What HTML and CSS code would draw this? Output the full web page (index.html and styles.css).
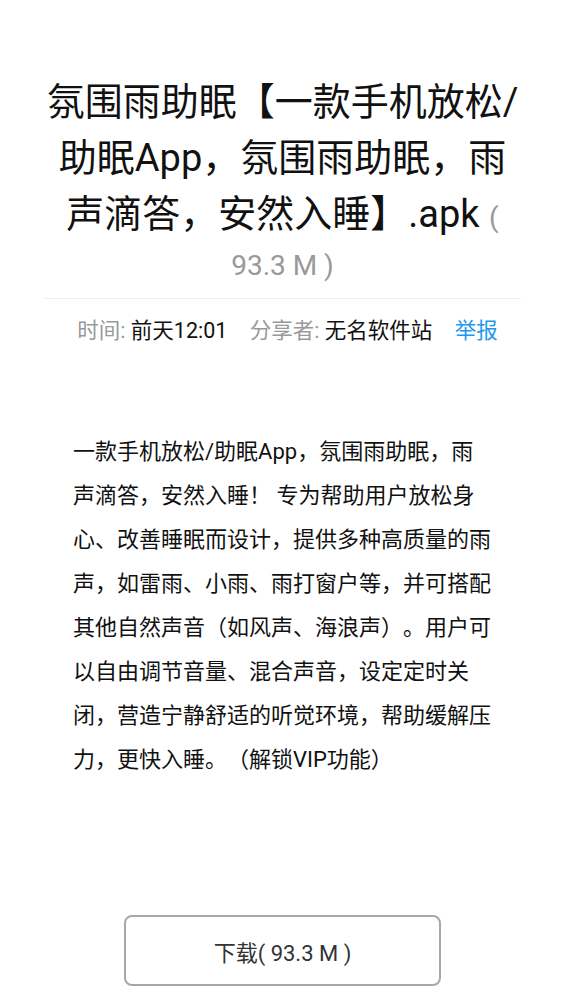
FILE: index.html
```html
<!DOCTYPE html>
<html lang="zh">
<head>
<meta charset="utf-8">
<title>氛围雨助眠</title>
<link rel="stylesheet" href="styles.css">
</head>
<body>
<div class="page">
  <h1 class="title"><span class="name">氛围雨助眠【一款手机放松/助眠App，氛围雨助眠，雨声滴答，安然入睡】.apk</span> <span class="size">( 93.3 M )</span></h1>
  <div class="divider"></div>
  <div class="meta">
    <span class="item"><span class="label">时间:</span> 前天12:01</span>
    <span class="item"><span class="label">分享者:</span> 无名软件站</span>
    <a class="report">举报</a>
  </div>
  <p class="desc">一款手机放松/助眠App，氛围雨助眠，雨声滴答，安然入睡！ 专为帮助用户放松身心、改善睡眠而设计，提供多种高质量的雨声，如雷雨、小雨、雨打窗户等，并可搭配其他自然声音（如风声、海浪声）。用户可以自由调节音量、混合声音，设定定时关闭，营造宁静舒适的听觉环境，帮助缓解压力，更快入睡。（解锁VIP功能）</p>
  <div class="actions">
    <button class="download">下载( 93.3 M )</button>
  </div>
</div>
</body>
</html>
```
FILE: styles.css
```css
html, body {
  margin: 0;
  padding: 0;
  background: #fff;
}
body {
  font-family: Roboto, "Noto Sans CJK SC", sans-serif;
  color: #111;
  text-spacing-trim: space-all;
}
.page {
  padding: 0 44px;
}
.title {
  margin: 74px 0 0;
  font-size: 38px;
  line-height: 0;
  font-weight: normal;
  text-align: center;
  color: #111;
}
.name {
  line-height: 56px;
}
.size {
  font-size: 28px;
  line-height: 48px;
  color: #999;
}
.divider {
  margin-top: 8px;
  border-top: 1px solid #eee;
}
.meta {
  margin-top: 17px;
  padding-left: 10px;
  font-size: 21.5px;
  line-height: 30px;
  text-align: center;
  color: #111;
}
.item {
  margin-right: 17px;
}
.label {
  color: #999;
}
.report {
  color: #1a98f0;
}
.desc {
  margin: 84px 0 0;
  padding: 0 29px;
  font-size: 22px;
  line-height: 44px;
  color: #111;
}
.actions {
  display: flex;
  justify-content: center;
  margin-top: 133px;
}
.download {
  width: 317px;
  height: 71px;
  border: 2px solid #a8a8a8;
  border-radius: 8px;
  background: #fff;
  font-family: Roboto, "Noto Sans CJK SC", sans-serif;
  font-size: 22px;
  color: #333;
}
```
